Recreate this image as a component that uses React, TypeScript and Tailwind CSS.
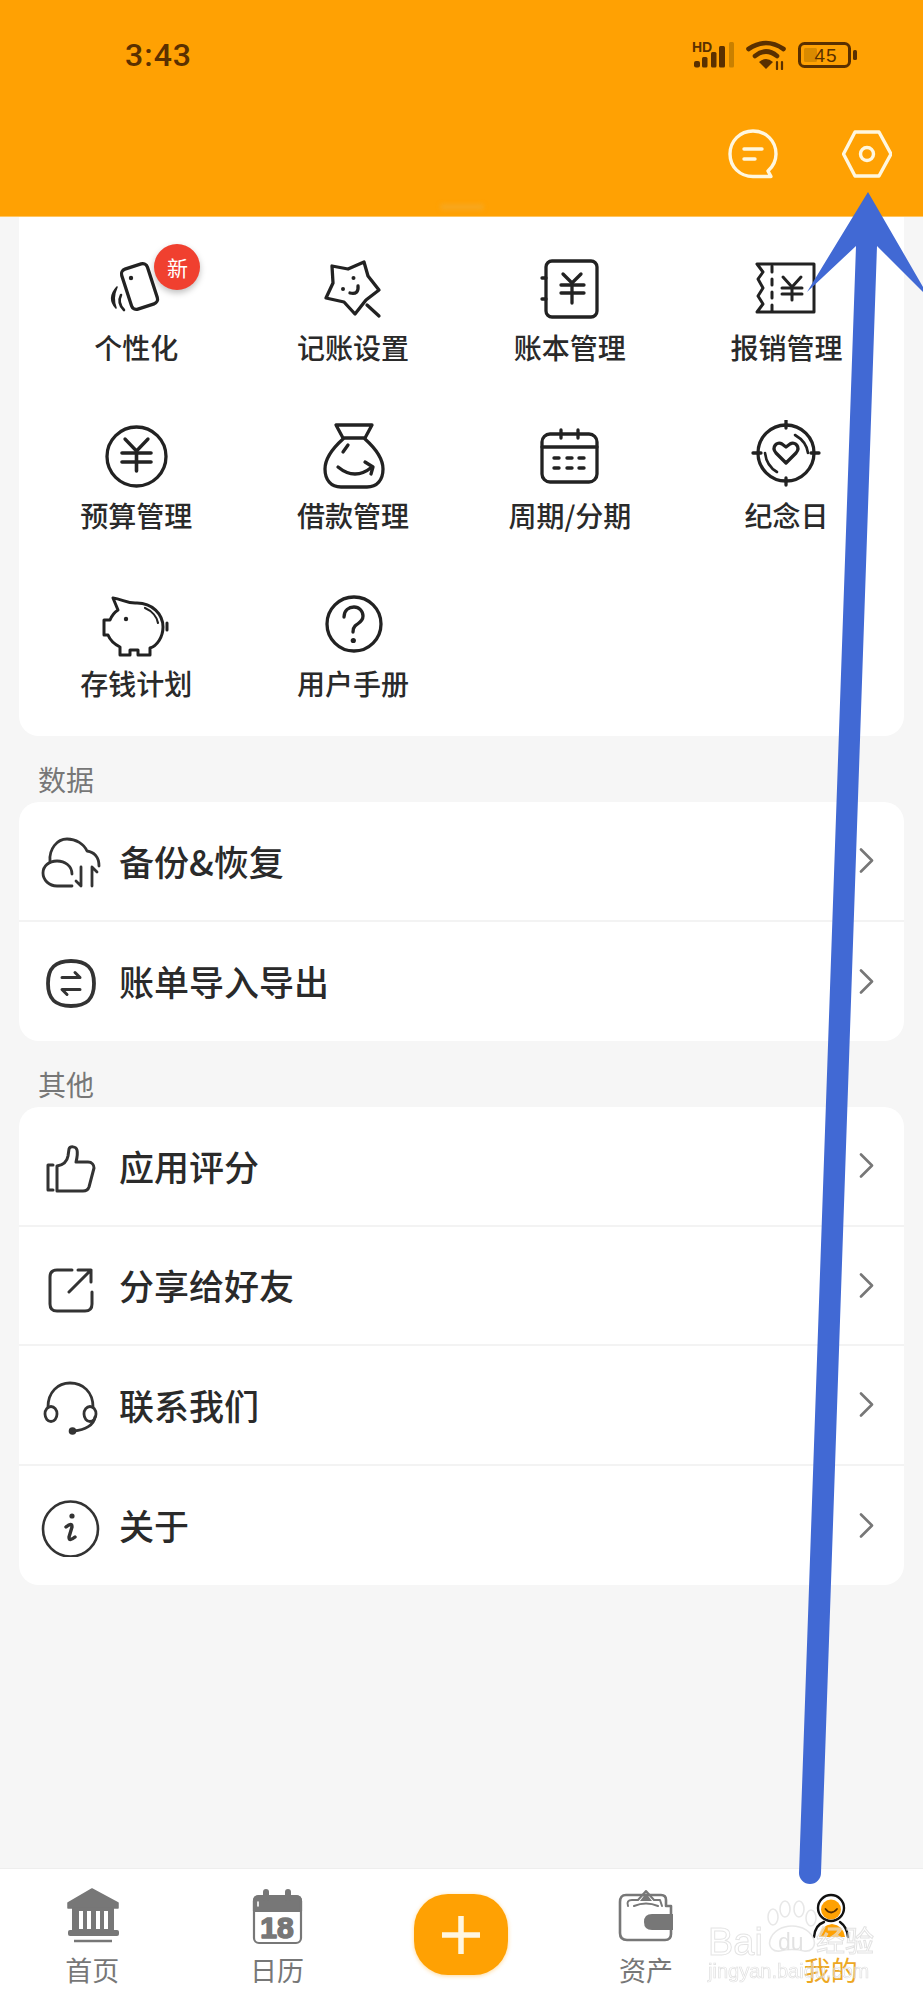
import React from "react";

const INK = "#222222";
const GREY = "#333333";
const NAV = "#777777";
const BROWN = "#5a3000";
const ORANGE = "#ffa103";

function Svg({ w = 72, h = 72, color = INK, sw = 3.3, children }: { w?: number; h?: number; color?: string; sw?: number; children: React.ReactNode }) {
  return (
    <svg width={w} height={h} viewBox={`0 0 ${w} ${h}`} fill="none" stroke={color} strokeWidth={sw} strokeLinecap="round" strokeLinejoin="round" className="block shrink-0">
      {children}
    </svg>
  );
}

const gridIcons: Record<string, React.ReactNode> = {
  card: (
    <Svg>
      <rect x="26" y="13.5" width="27" height="42" rx="5" transform="rotate(-18 39.5 34.5)" />
      <circle cx="31" cy="26" r="2.2" fill={INK} stroke="none" />
      <path d="M17 35 Q7 46 16 56 Q12 46 17 35 Z" fill={INK} strokeWidth="1.6" />
      <path d="M21 43 Q17 51 24 58" strokeWidth="2.6" />
    </Svg>
  ),
  star: (
    <Svg>
      <path d="M15 14 L31 17 L47 10 L51 24 L62 38 L49 48 L38 62 L27 50 L9 46 L16 31 Z" />
      <path d="M50 53 L62 64" />
      <circle cx="26" cy="37" r="2" fill={INK} stroke="none" />
      <circle cx="36.5" cy="26" r="2" fill={INK} stroke="none" />
      <path d="M33 41 Q42 43 41 34" />
    </Svg>
  ),
  yen: (
    <Svg>
      <circle cx="36.5" cy="36.5" r="29.5" />
      <path d="M25 19 L36.5 31 L48 19" />
      <path d="M22 33 H51 M22 42 H51 M36.5 31 V51" strokeWidth="3.6" />
    </Svg>
  ),
  bag: (
    <Svg>
      <path d="M19 5 H55 L48 18 H26 Z" />
      <path d="M26 19 C16 28 8 38 8 49 C8 60 14 67 24 67 H50 C60 67 66 60 66 49 C66 38 58 28 48 19" />
      <path d="M31 25 L26 32" />
      <path d="M21 47 Q38 61 55 47 M48 42 L56 47 L54 54" />
    </Svg>
  ),
  piggy: (
    <Svg sw={3}>
      <path d="M13 10 C22 11 28 16 37 15 C52 15 63 26 63 39 C63 49 57 58 50 60 V67 H38 V62 H30 V67 H20 V59 C14 56 10 52 8 47 H4 V32 H10 C12 27 15 24 18 22 Z" />
      <path d="M45 20 C52 23 57 29 58 35" strokeWidth="2.2" />
      <path d="M67 35 V42" />
      <circle cx="26" cy="31" r="2.2" fill={INK} stroke="none" />
    </Svg>
  ),
  question: (
    <Svg>
      <circle cx="37" cy="36" r="27" />
      <path d="M27 29 C27 22 32 19 37 19 C42 19 46 23 46 28 C46 34 41 35 38 38 C36 40 36 41 36 44" />
      <circle cx="36.3" cy="52.5" r="2.6" fill={INK} stroke="none" />
    </Svg>
  ),
  notebook: (
    <Svg>
      <rect x="12" y="9" width="51" height="56" rx="6" />
      <path d="M8 26 H12 M8 47 H12" />
      <path d="M29 22 L38 31 L47 22" />
      <path d="M27 33 H50 M27 41 H50 M38 31 V51" />
    </Svg>
  ),
  ticket: (
    <Svg sw={3}>
      <path d="M6 12 H63 V60 H6 L12 52 L7 44 L12 36 L7 27 L12 20 Z" />
      <path d="M21 14 V60" strokeDasharray="6 7" />
      <path d="M32 25 L41 35 L50 25" />
      <path d="M31 36 H51 M31 42 H51 M41 35 V48" />
    </Svg>
  ),
  calendar: (
    <Svg>
      <rect x="8" y="14" width="55" height="48" rx="8" />
      <path d="M8 27 H63 M27 10 V18 M44 10 V18" />
      <path d="M20 38 H25 M33 38 H38 M45 38 H50 M20 48 H25 M33 48 H38 M45 48 H50" strokeWidth="3.4" />
    </Svg>
  ),
  target: (
    <Svg>
      <circle cx="35" cy="33" r="28" />
      <path d="M35 0.5 V8 M35 58 V65 M2 33 H10 M60 33 H68" />
      <path d="M35 43 L25 33 C20 27 26 21 31 24 L35 27 L39 24 C44 21 50 27 45 33 Z" />
      <path d="M44 15 C51 19 56 25 57 33 M14 33 C15 41 19 48 26 52" strokeWidth="2.6" />
    </Svg>
  ),
};

function GridItem({ icon, label, badge }: { icon: string; label: string; badge?: boolean }) {
  return (
    <div className="flex flex-col items-center h-[168px]">
      <div className="relative w-[72px] h-[72px]">
        {gridIcons[icon]}
        {badge && (
          <div className="absolute left-[54px] top-[-8px] w-[46px] h-[46px] rounded-full bg-[#f0402f] text-white text-[21px] leading-[46px] text-center shadow-[0_3px_6px_rgba(0,0,0,0.25)]">
            新
          </div>
        )}
      </div>
      <div className="mt-[5px] text-[28px] leading-[36px] font-medium text-[#2a2a2a] whitespace-nowrap">{label}</div>
    </div>
  );
}

const rowIcons: Record<string, React.ReactNode> = {
  cloud: (
    <Svg w={64} h={64} color={GREY} sw={2.8}>
      <path d="M33 57 H18 C10 57 4 51 4 44 C4 37 10 32 18 32 C26 32 33 37 33 45" />
      <path d="M11 32 C10 20 18 10 28 10 C37 10 45 15 48 22 C55 23 60 28 60 37" />
      <path d="M42 38 V57 L37 52" />
      <path d="M53 57 V38 L58 43" />
    </Svg>
  ),
  swap: (
    <Svg w={64} h={64} color={GREY} sw={3.8}>
      <path d="M32 12 C48 12 55 19 55 34.5 C55 50 48 57 32 57 C16 57 9 50 9 34.5 C9 19 16 12 32 12 Z" />
      <path d="M23 28.5 H41 L36 23.5" strokeWidth="3" />
      <path d="M41 40.5 H23 L28 45.5" strokeWidth="3" />
    </Svg>
  ),
  thumb: (
    <Svg w={64} h={64} color={GREY} sw={3}>
      <path d="M14 31 H9 V56 H14" />
      <path d="M18 57 V32 C24 31 28 28 29 22 L30 15 C31 12 37 12 38 16 C39 20 38 24 37 28 H49 C53 28 55 31 55 34 L50 53 C49 56 47 57 44 57 Z" />
    </Svg>
  ),
  share: (
    <Svg w={64} h={64} color={GREY} sw={3}>
      <path d="M33 17 H18 Q11 17 11 24 V51 Q11 58 18 58 H46 Q53 58 53 51 V39" />
      <path d="M30 39 L52 17 M39 17 H52 V29" />
    </Svg>
  ),
  headset: (
    <Svg w={64} h={64} color={GREY} sw={2.8}>
      <path d="M9 34 C9 19 19 10 31 10 C44 10 54 19 54 34" />
      <ellipse cx="12" cy="41" rx="6" ry="7.5" />
      <ellipse cx="51" cy="41" rx="6" ry="7.5" />
      <path d="M56 44 C55 52 46 57 35 58" />
      <circle cx="33.5" cy="58" r="3.8" fill={GREY} stroke="none" />
    </Svg>
  ),
  info: (
    <Svg w={64} h={64} color={GREY} sw={2.6}>
      <circle cx="31.5" cy="36" r="27.5" />
      <circle cx="33" cy="23" r="2.6" fill={GREY} stroke="none" />
      <path d="M27 34 Q33 29 33 34 L30 44 Q30 49 36 44" strokeWidth="3.4" />
    </Svg>
  ),
};

function Chevron() {
  return (
    <svg width="15" height="25" viewBox="0 0 15 25" fill="none" stroke="#777777" strokeWidth="2.6" strokeLinecap="round" strokeLinejoin="round" className="block shrink-0">
      <path d="M2 1.5 L13 12.5 L2 23.5" />
    </svg>
  );
}

function Row({ icon, label, last }: { icon: string; label: string; last?: boolean }) {
  return (
    <div className={`flex items-center h-[119.5px] pl-[20px] pr-[30px] ${last ? "" : "border-b-2 border-[#f3f3f3]"}`}>
      {rowIcons[icon]}
      <div className="ml-[16px] text-[35px] leading-[44px] font-medium text-[#2a2a2a] flex-1 whitespace-nowrap">{label}</div>
      <Chevron />
    </div>
  );
}

function SectionLabel({ text }: { text: string }) {
  return <div className="h-[66px] pt-[25px] pl-[19px] text-[28px] leading-[36px] text-[#777777]">{text}</div>;
}

const navIcons: Record<string, React.ReactNode> = {
  bank: (
    <Svg w={60} h={58} color={NAV} sw={2.5}>
      <path d="M30 2 L56 16 V21 H6 V16 Z" fill={NAV} stroke={NAV} strokeWidth="1.5" />
      <rect x="10" y="21" width="42" height="23" fill={NAV} stroke="none" />
      <rect x="17" y="24" width="4" height="18" fill="#ffffff" stroke="none" />
      <rect x="25" y="24" width="4" height="18" fill="#ffffff" stroke="none" />
      <rect x="34" y="24" width="4" height="18" fill="#ffffff" stroke="none" />
      <rect x="42" y="24" width="4" height="18" fill="#ffffff" stroke="none" />
      <rect x="6" y="43" width="51" height="6" rx="2" fill={NAV} stroke="none" />
      <path d="M12 54 H50" strokeLinecap="butt" />
    </Svg>
  ),
  cal: (
    <Svg w={60} h={58} color={NAV} sw={2.2}>
      <rect x="7" y="9" width="47" height="47" rx="5" />
      <path d="M7 14 Q7 9 12 9 H49 Q54 9 54 14 V24 H7 Z" fill={NAV} />
      <rect x="16" y="2" width="6" height="12" rx="3" fill={NAV} stroke="none" />
      <rect x="38" y="2" width="6" height="12" rx="3" fill={NAV} stroke="none" />
      <path d="M11 15 V19" stroke="#ffffff" strokeWidth="1.6" />
      <text x="30" y="51" textAnchor="middle" fontFamily="'Liberation Sans', sans-serif" fontWeight="700" fontSize="30" fill={NAV} stroke={NAV} strokeWidth="1.6">18</text>
    </Svg>
  ),
  wallet: (
    <Svg w={60} h={58} color={NAV} sw={2.6}>
      <path d="M50 19 V13 Q50 8 45 8 H10 Q4 8 4 15 V46 Q4 53 11 53 H49 Q55 53 55 47 V19 Z" />
      <path d="M12 19 Q10 13 16 13 H22 L30 4 L38 13 H44 L46 19" strokeWidth="2" />
      <path d="M30 6 L36 14 H24 Z" fill={NAV} stroke="none" />
      <path d="M18 19 Q30 14 42 19" strokeWidth="2" />
      <path d="M36 27 H57 V43 H36 Q28 43 28 35 Q28 27 36 27 Z" fill={NAV} stroke="none" />
    </Svg>
  ),
  person: (
    <Svg w={60} h={58} color="#111111" sw={2.4}>
      <circle cx="30" cy="21" r="13" fill="#ffffff" />
      <circle cx="30" cy="22.5" r="10" fill={ORANGE} stroke="none" />
      <path d="M24.5 22 Q30 29 36 22" stroke="#5a3000" strokeWidth="1.8" />
      <path d="M18 50 Q20 38 31 37 Q42 38 44 50 Z" fill={ORANGE} stroke="none" />
      <path d="M13 50 Q14 38 23 35 M47 50 Q46 40 39 35" />
    </Svg>
  ),
};

function NavItem({ icon, label, active }: { icon: string; label: string; active?: boolean }) {
  return (
    <div className="flex-1 flex flex-col items-center pt-[18px]">
      {navIcons[icon]}
      <div className={`mt-[10px] text-[27px] leading-[30px] whitespace-nowrap ${active ? "text-[#eda722]" : "text-[#777777]"}`}>{label}</div>
    </div>
  );
}

export default function App() {
  return (
    <div className="relative w-[923px] h-[2000px] overflow-hidden flex flex-col bg-[#f6f6f6] font-['Noto_Sans_CJK_SC','Noto_Sans',sans-serif]">
      {/* header */}
      <header className="relative shrink-0 h-[217px] bg-[#ffa103] border-b border-[#ffc561]">
        <div className="flex items-center justify-between h-[110px] pl-[125px] pr-[65px]">
          <div className="font-['Roboto',sans-serif] font-medium text-[32px] leading-[36px] tracking-[1px] text-[#5a3000]">3:43</div>
          <div className="flex items-center gap-[12px]">
            <svg width="42" height="30" viewBox="0 0 42 30" className="block">
              <text x="0" y="12" fontFamily="'Liberation Sans', sans-serif" fontWeight="700" fontSize="14" fill={BROWN}>HD</text>
              <rect x="2" y="21" width="6" height="6.5" rx="2" fill={BROWN} />
              <rect x="10" y="17" width="5.5" height="10.5" rx="1.5" fill={BROWN} />
              <rect x="19" y="12" width="5.5" height="15.5" rx="1.5" fill={BROWN} />
              <rect x="27" y="6" width="6" height="21.5" rx="1.5" fill={BROWN} />
              <rect x="37" y="2" width="5" height="25.5" rx="1.5" fill="#c98000" />
            </svg>
            <svg width="40" height="30" viewBox="0 0 40 30" fill="none" stroke={BROWN} strokeWidth="4.6" strokeLinecap="round" className="block">
              <path d="M2.5 9 Q20 -3 37.5 9" />
              <path d="M9 16 Q20 7 31 16" />
              <path d="M13 22 L20 29 L27 22 Q20 16 13 22 Z" fill={BROWN} stroke="none" />
              <path d="M31 22 V29 M36 22 V29" strokeWidth="2.2" />
            </svg>
            <svg width="60" height="26" viewBox="0 0 60 26" fill="none" className="block">
              <rect x="1.5" y="1.5" width="50" height="23" rx="5" stroke={BROWN} strokeWidth="3" />
              <rect x="6" y="6" width="13" height="14" rx="1.5" fill="#d98a00" />
              <rect x="55" y="8" width="4" height="10" rx="1.5" fill={BROWN} />
              <text x="28" y="20" textAnchor="middle" fontFamily="'Liberation Sans', sans-serif" fontSize="19" letterSpacing="1" fill={BROWN}>45</text>
            </svg>
          </div>
        </div>
        <div className="flex justify-end gap-[64px] pr-[31px] pt-[19px]">
          <svg width="50" height="50" viewBox="0 0 50 50" fill="none" stroke="#fff7e0" strokeWidth="3.4" strokeLinecap="round" strokeLinejoin="round" className="block">
            <path d="M25 2 C12 2 2 12 2 25 C2 38 12 47.5 25 47.5 H43 L40 42 C45 37.5 48 31.5 48 25 C48 12 38 2 25 2 Z" />
            <path d="M16 20 H34 M16 30 H27" />
          </svg>
          <svg width="50" height="50" viewBox="0 0 50 50" fill="none" stroke="#fff7e0" strokeWidth="3.4" strokeLinejoin="round" className="block">
            <path d="M13 3 H37 L49 25 L37 47 H13 L1.5 25 Z" />
            <circle cx="25" cy="25" r="6.5" />
          </svg>
        </div>
        <div className="absolute left-[440px] top-[204px] w-[44px] h-[6px] rounded-full bg-[#f7a71f] blur-[2px]" />
      </header>

      {/* content */}
      <main className="flex-1 px-[19px]">
        <section className="bg-white rounded-b-[20px] pt-[35px] px-[9px] grid grid-cols-4 h-[519px] content-start">
          <GridItem icon="card" label="个性化" badge />
          <GridItem icon="star" label="记账设置" />
          <GridItem icon="notebook" label="账本管理" />
          <GridItem icon="ticket" label="报销管理" />
          <GridItem icon="yen" label="预算管理" />
          <GridItem icon="bag" label="借款管理" />
          <GridItem icon="calendar" label="周期/分期" />
          <GridItem icon="target" label="纪念日" />
          <GridItem icon="piggy" label="存钱计划" />
          <GridItem icon="question" label="用户手册" />
        </section>

        <SectionLabel text="数据" />
        <section className="bg-white rounded-[20px]">
          <Row icon="cloud" label="备份&恢复" />
          <Row icon="swap" label="账单导入导出" last />
        </section>

        <SectionLabel text="其他" />
        <section className="bg-white rounded-[20px]">
          <Row icon="thumb" label="应用评分" />
          <Row icon="share" label="分享给好友" />
          <Row icon="headset" label="联系我们" />
          <Row icon="info" label="关于" last />
        </section>
      </main>

      {/* tab bar */}
      <nav className="shrink-0 h-[132px] bg-white border-t border-[#eeeeee] flex">
        <NavItem icon="bank" label="首页" />
        <NavItem icon="cal" label="日历" />
        <div className="flex-1 flex items-center justify-center">
          <div className="w-[94px] h-[81px] rounded-[34px] bg-[#ffa103] flex items-center justify-center shadow-[0_1px_4px_rgba(255,161,3,0.4)]">
            <svg width="40" height="40" viewBox="0 0 40 40" stroke="#fff6e0" strokeWidth="5.5" className="block">
              <path d="M20 1 V39 M1 20 H39" />
            </svg>
          </div>
        </div>
        <NavItem icon="wallet" label="资产" />
        <NavItem icon="person" label="我的" active />
      </nav>

      {/* annotation arrow drawn over the screenshot */}
      <svg width="923" height="2000" viewBox="0 0 923 2000" className="absolute left-0 top-0 pointer-events-none">
        <path d="M868 192 L930 299 L877 246 L821 1873 A11 11 0 0 1 799 1873 L856 246 L807 292 Z" fill="#4169d4" />
      </svg>

      {/* baidu watermark */}
      <div className="absolute left-[706px] top-[1900px] w-[170px] h-[84px] pointer-events-none opacity-80">
        <svg width="52" height="54" viewBox="0 0 52 54" fill="none" stroke="#e2e2e2" strokeWidth="1.6" className="absolute left-[60px] top-[0px]">
          <ellipse cx="7" cy="17" rx="5" ry="8" />
          <ellipse cx="19" cy="9" rx="5" ry="8" />
          <ellipse cx="33" cy="9" rx="5" ry="8" />
          <ellipse cx="45" cy="18" rx="5" ry="8" />
          <path d="M4 40 C7 31 16 26 26 26 C36 26 45 31 48 40 C50 48 44 52 38 51 C30 49 22 49 14 51 C8 52 2 48 4 40 Z" />
        </svg>
        <div className="absolute left-[2px] top-[23px] font-['Liberation_Sans',sans-serif] text-[38px] leading-[38px] text-white/50 [-webkit-text-stroke:1px_#dedede]">Bai</div>
        <div className="absolute left-[72px] top-[30px] font-['Liberation_Sans',sans-serif] text-[23px] leading-[24px] text-[#dcdcdc]">du</div>
        <div className="absolute left-[110px] top-[22px] text-[29px] leading-[34px] text-white/60 [-webkit-text-stroke:1px_#dcdcdc] whitespace-nowrap">经验</div>
        <div className="absolute left-[2px] top-[60px] font-['Liberation_Sans',sans-serif] text-[20px] leading-[22px] text-white/40 [-webkit-text-stroke:0.7px_#d8d8d8] whitespace-nowrap">jingyan.baidu.com</div>
      </div>
    </div>
  );
}
